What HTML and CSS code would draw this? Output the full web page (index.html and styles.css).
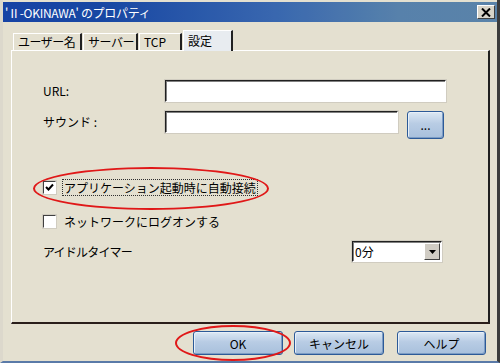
FILE: index.html
```html
<!DOCTYPE html>
<html lang="ja">
<head>
  <meta charset="UTF-8" />
  <meta name="viewport" content="width=device-width, initial-scale=1" />
  <title>'Ⅱ-OKINAWA' のプロパティ</title>
  <link rel="stylesheet" href="styles.css">
</head>
<body>

  <div class="window">
    <div class="titlebar">
      <span class="title">'Ⅱ-OKINAWA' のプロパティ</span>
      <span class="close-btn">
        <svg width="10" height="9" viewBox="0 0 10 9"><path d="M1 0.5 L9 8.5 M9 0.5 L1 8.5" stroke="#000" stroke-width="2" /></svg>
      </span>
    </div>

    <div class="tabs">
      <span class="tab">ユーザー名</span>
      <span class="tab">サーバー</span>
      <span class="tab">TCP</span>
      <span class="tab active">設定</span>
    </div>

    <div class="panel">
      <div class="field-row url-row">
        <label class="field-label" for="url">URL:</label>
        <input type="text" id="url" class="text-input wide" />
      </div>

      <div class="field-row sound-row">
        <label class="field-label" for="sound">サウンド :</label>
        <input type="text" id="sound" class="text-input narrow" />
        <button class="xp-btn browse-btn">...</button>
      </div>

      <div class="check-row first-check">
        <span class="checkbox checked">
          <svg width="9" height="9" viewBox="0 0 9 9"><path d="M1 4 L3.5 6.5 L8 1.5" stroke="#000" stroke-width="2" fill="none" /></svg>
        </span>
        <span class="check-text focused">アプリケーション起動時に自動接続</span>
      </div>

      <div class="check-row second-check">
        <span class="checkbox"></span>
        <span class="check-text">ネットワークにログオンする</span>
      </div>

      <div class="idle-row">
        <span class="idle-label">アイドルタイマー</span>
        <div class="combo">
          <span class="combo-value">0分</span>
          <span class="combo-arrow">
            <svg width="7" height="4" viewBox="0 0 7 4"><path d="M0 0 H7 L3.5 4 Z" fill="#000" /></svg>
          </span>
        </div>
      </div>

      <!-- red marking round the first option -->
      <span class="mark mark-check"></span>
    </div>

    <div class="buttons">
      <button class="xp-btn dlg-btn ok-btn">OK</button>
      <button class="xp-btn dlg-btn cancel-btn">キャンセル</button>
      <button class="xp-btn dlg-btn help-btn">ヘルプ</button>
      <span class="mark mark-ok"></span>
    </div>
  </div>

</body>
</html>
```

FILE: styles.css
```css
/* Global Styles */
* {
  margin: 0;
  padding: 0;
  box-sizing: border-box;
}

body {
  font-family: "Noto Sans CJK JP", "DejaVu Sans", sans-serif;
  font-size: 12px;
  color: #000;
  background: #e4e0d0;
}

.window {
  position: relative;
  width: 500px;
  height: 363px;
  background: #e4e0d0;
  border-left: 3px solid #dcd8cc;
  border-right: 3px solid #3c3c3c;
  border-bottom: 2px solid #5a7aa8;
  padding-top: 2px;
}

/* Title bar */
.titlebar {
  height: 20px;
  display: flex;
  align-items: center;
  justify-content: space-between;
  padding: 0 2px 0 2px;
  background:
    radial-gradient(rgba(255, 255, 255, 0.12) 0.6px, transparent 0.8px) 0 0 / 2px 2px,
    linear-gradient(to right, #0838a0 0%, #0a3c9e 20%, #2d5eaa 55%, #4d7aa6 80%, #507ca4 100%);
  color: #fff;
}

.title {
  font-size: 12px;
  letter-spacing: -0.3px;
}

.close-btn {
  width: 18px;
  height: 14px;
  background: #d8d4c8;
  border: 1px solid;
  border-color: #fff #404040 #404040 #fff;
  display: flex;
  align-items: center;
  justify-content: center;
}

/* Tabs */
.tabs {
  display: flex;
  align-items: flex-end;
  height: 28px;
  padding-left: 10px;
}

.tab {
  height: 17px;
  padding: 0 4px;
  line-height: 16px;
  font-size: 12px;
  white-space: nowrap;
  overflow: hidden;
  background: #e4e0d0;
  border-top: 1px solid #fff;
  border-left: 1px solid #fff;
  border-right: 2px solid #202020;
  margin-right: 1px;
}

.tab:first-child {
  width: 69px;
  letter-spacing: -0.5px;
}

.tab:nth-child(2) {
  width: 55px;
  letter-spacing: -0.5px;
}

.tab:nth-child(3) {
  width: 43px;
}

.tab.active {
  width: 50px;
  height: 21px;
  line-height: 19px;
  background: #e8ecf0;
  margin-bottom: -1px;
  position: relative;
  z-index: 1;
}

/* Panel */
.panel {
  position: relative;
  margin-left: 8px;
  width: 479px;
  height: 274px;
  border-top: 1px solid #fff;
  border-left: 1px solid #fff;
  border-right: 2px solid #202020;
  border-bottom: 2px solid #2a1e1a;
  padding-left: 31px;
}

.field-row {
  display: flex;
  align-items: flex-start;
}

.url-row {
  margin-top: 29px;
}

.sound-row {
  margin-top: 9px;
}

.field-label {
  width: 122px;
  line-height: 22px;
}

.text-input {
  height: 22px;
  background: #fff;
  border: 1px solid;
  border-color: #202020 #fff #fff #202020;
  box-shadow: inset 1px 1px 0 #808080, 0 0 0 1px #d0ccc0;
  outline: none;
}

.text-input.wide {
  width: 281px;
}

.text-input.narrow {
  width: 233px;
}

.xp-btn {
  font-family: inherit;
  font-size: 12px;
  color: #000;
  border: 1px solid #2c5a98;
  border-radius: 3px;
  background: linear-gradient(to bottom, #dce8f4 0%, #b8cce4 45%, #a8c0dc 100%);
  box-shadow: inset 1px 1px 0 #e8f0f8, inset -1px -1px 0 #7c9cc4;
}

.browse-btn {
  width: 37px;
  height: 28px;
  margin-left: 9px;
  line-height: 18px;
}

/* Checkboxes */
.check-row {
  display: flex;
  align-items: center;
  height: 16px;
}

.first-check {
  margin-top: 40px;
}

.second-check {
  margin-top: 18px;
}

.checkbox {
  width: 13px;
  height: 13px;
  background: #fff;
  border: 1px solid;
  border-color: #404040 #fff #fff #404040;
  box-shadow: 0 0 0 1px #d0ccc0;
  display: flex;
  align-items: center;
  justify-content: center;
  margin-right: 6px;
}

.check-text {
  font-size: 12px;
  line-height: 15px;
  padding: 0 1px;
  border: 1px solid transparent;
  white-space: nowrap;
}

.check-text.focused {
  border: 1px dotted #303030;
}

/* Idle timer */
.idle-row {
  display: flex;
  align-items: center;
  justify-content: space-between;
  margin-top: 12px;
  width: 399px;
}

.idle-label {
  font-size: 12px;
  letter-spacing: -0.8px;
}

.combo {
  width: 90px;
  height: 21px;
  display: flex;
  align-items: center;
  justify-content: space-between;
  background: #fff;
  border: 1px solid;
  border-color: #202020 #fff #fff #202020;
  box-shadow: inset 1px 1px 0 #808080, 0 0 0 1px #d0ccc0;
  padding: 0 1px 0 2px;
}

.combo-value {
  font-size: 12px;
}

.combo-arrow {
  width: 16px;
  height: 17px;
  background: #d0ccc4;
  border: 1px solid;
  border-color: #fff #404040 #404040 #fff;
  display: flex;
  align-items: center;
  justify-content: center;
}

/* Dialog buttons */
.buttons {
  position: relative;
  display: flex;
  justify-content: flex-end;
  gap: 11px;
  padding-right: 11px;
  margin-top: 7px;
}

.dlg-btn {
  width: 90px;
  height: 24px;
}

.help-btn {
  width: 89px;
  margin-left: 2px;
}

/* Red markings */
.mark {
  position: absolute;
  border: 2px solid #e01818;
  border-radius: 50%;
  pointer-events: none;
}

.mark-check {
  left: 21px;
  top: 116px;
  width: 236px;
  height: 43px;
}

.mark-ok {
  left: 172px;
  top: -6px;
  width: 116px;
  height: 36px;
}
```
